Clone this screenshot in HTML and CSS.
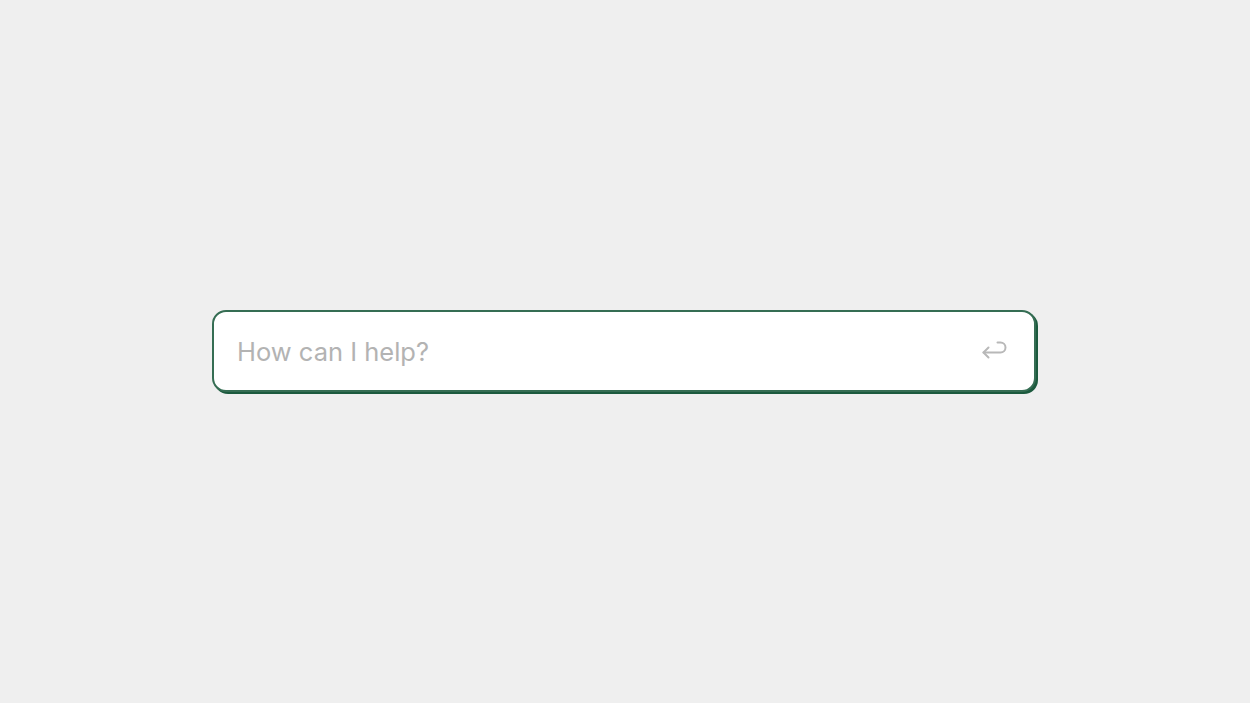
FILE: index.html
```html
<!DOCTYPE html>
<html lang="en">
<head>
<meta charset="utf-8">
<title>How can I help?</title>
<link rel="stylesheet" href="styles.css">
</head>
<body>
<main class="stage">
  <form class="prompt">
    <input class="prompt-input" type="text" placeholder="How can I help?">
    <button class="prompt-send" type="button" aria-label="Submit">
      <svg width="26" height="20" viewBox="0 0 26 20" fill="none" stroke="currentColor" stroke-width="2" stroke-linecap="round" stroke-linejoin="round">
        <path d="M6.5 6.5 L1.5 11.5 L6.5 16.5"/>
        <path d="M1.5 11.5 H18.5 A5 5 0 0 0 18.5 1.5 H15.5"/>
      </svg>
    </button>
  </form>
</main>
</body>
</html>
```
FILE: styles.css
```css
* { box-sizing: border-box; }
html, body { margin: 0; padding: 0; }
body {
  background: #efefef;
  font-family: Inter, "Noto Sans", sans-serif;
}
.stage {
  min-height: 100vh;
  display: flex;
  align-items: center;
  justify-content: center;
}
.prompt {
  width: 824px;
  height: 82px;
  margin: 0 2px 2px 0;
  background: #ffffff;
  border: 2px solid #356d53;
  border-radius: 14px;
  box-shadow: 2px 2px 0 #1c5a3e;
  display: flex;
  align-items: center;
  padding: 0 26px 0 23px;
}
.prompt-input {
  flex: 1;
  border: none;
  outline: none;
  background: transparent;
  font-family: inherit;
  font-size: 25.5px;
  color: #333;
  padding: 0;
  margin-top: 1px;
}
.prompt-input::placeholder { color: #b3b3b3; }
.prompt-send {
  border: none;
  background: transparent;
  padding: 0;
  color: #b8b8b8;
  display: flex;
  align-items: center;
  margin-top: 1px;
}
```
